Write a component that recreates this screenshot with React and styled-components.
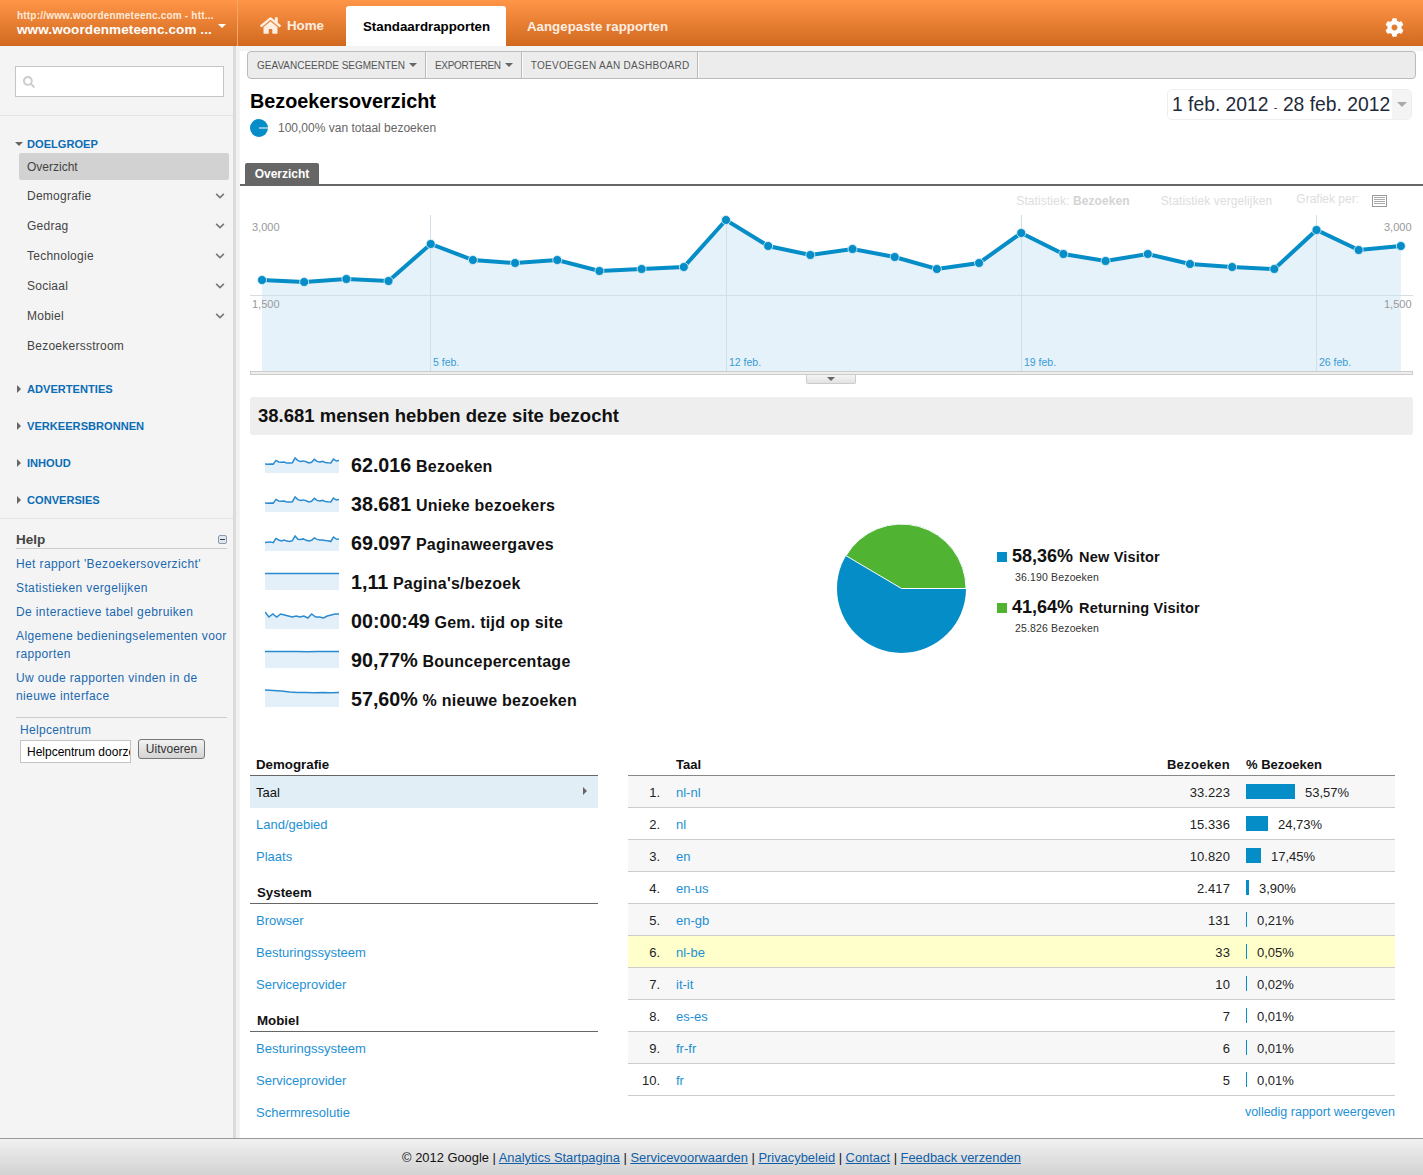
import React from 'react'
import styled, { createGlobalStyle } from 'styled-components'
import { FaHome, FaCog, FaSearch, FaChevronDown } from 'react-icons/fa'

const GlobalStyle = createGlobalStyle`
  html, body { margin: 0; padding: 0; background: #fff; }
  body { font-family: "Liberation Sans", Arial, sans-serif; font-size: 13px; color: #222; }
  * { box-sizing: border-box; }
  a { text-decoration: none; }
`

const chartY = [280, 282, 279, 281, 244, 260, 263, 260, 271, 269, 267, 220, 246, 255, 249, 257, 269, 263, 233, 254, 261, 254, 264, 267, 269, 230, 250, 246]
const chartPoints = chartY.map((y, i) => [22 + i * 42.18, y - 214])

const sideItems = ['Demografie', 'Gedrag', 'Technologie', 'Sociaal', 'Mobiel']
const sideSections = ['ADVERTENTIES', 'VERKEERSBRONNEN', 'INHOUD', 'CONVERSIES']
const helpLinks = [
  "Het rapport 'Bezoekersoverzicht'",
  'Statistieken vergelijken',
  'De interactieve tabel gebruiken',
  'Algemene bedieningselementen voor rapporten',
  'Uw oude rapporten vinden in de nieuwe interface',
]

const bump = chartY.map(y => 3 + (y - 220) / 10)
const metrics = [
  { value: '62.016', label: 'Bezoeken', line: bump },
  { value: '38.681', label: 'Unieke bezoekers', line: bump },
  { value: '69.097', label: 'Paginaweergaves', line: bump.map((y, i) => y + (i % 3 === 0 ? 0.6 : 0)) },
  { value: '1,11', label: "Pagina's/bezoek", line: [1.5, 1.5, 1.6, 1.5, 1.5, 1.6, 1.5, 1.5] },
  { value: '00:00:49', label: 'Gem. tijd op site', line: [1, 6, 3, 6, 3, 4, 5, 6, 5, 6, 5, 7, 3, 6, 6, 7, 5, 4, 3, 3] },
  { value: '90,77%', label: 'Bouncepercentage', line: [1.5, 1.5, 1.6, 1.5, 1.8, 1.5, 1.5, 1.5] },
  { value: '57,60%', label: '% nieuwe bezoeken', line: [1, 1.4, 2, 3, 3.4, 3.6, 3.8, 3.4, 3.8, 3.6] },
]

const groups = [
  { title: 'Demografie', items: ['Taal', 'Land/gebied', 'Plaats'] },
  { title: 'Systeem', items: ['Browser', 'Besturingssysteem', 'Serviceprovider'] },
  { title: 'Mobiel', items: ['Besturingssysteem', 'Serviceprovider', 'Schermresolutie'] },
]

const languages = [
  ['nl-nl', '33.223', 49, '53,57%'],
  ['nl', '15.336', 22, '24,73%'],
  ['en', '10.820', 15, '17,45%'],
  ['en-us', '2.417', 3, '3,90%'],
  ['en-gb', '131', 1, '0,21%'],
  ['nl-be', '33', 1, '0,05%'],
  ['it-it', '10', 1, '0,02%'],
  ['es-es', '7', 1, '0,01%'],
  ['fr-fr', '6', 1, '0,01%'],
  ['fr', '5', 1, '0,01%'],
]

function Sparkline({ line }) {
  const step = 74 / (line.length - 1)
  const pts = line.map((y, i) => `${(i * step).toFixed(1)},${y.toFixed(1)}`).join(' ')
  return (
    <svg width="74" height="18" viewBox="0 0 74 18">
      <polygon points={`0,18 ${pts} 74,18`} fill="#e3f0f9" />
      <polyline points={pts} fill="none" stroke="#2a8bd0" strokeWidth="1.5" />
    </svg>
  )
}

function TrafficChart() {
  const line = chartPoints.map(p => p.join(',')).join(' ')
  return (
    <svg width="1183" height="157" viewBox="0 0 1183 157" style={{ display: 'block' }}>
      <polygon points={`22,157 ${line} ${chartPoints[27][0]},157`} fill="#e5f2f9" />
      <line x1="10" x2="1173" y1="81.5" y2="81.5" stroke="#d3dfe6" />
      {[190.5, 486.5, 781.5, 1076.5].map(x => (
        <line key={x} x1={x} x2={x} y1="1" y2="157" stroke="#d3dfe6" />
      ))}
      <polyline points={line} fill="none" stroke="#058dc7" strokeWidth="4" />
      {chartPoints.map(([x, y]) => (
        <circle key={x} cx={x} cy={y} r="4.5" fill="#058dc7" stroke="#e5f2f9" strokeWidth="0.8" />
      ))}
      <g fontSize="11" fill="#999" fontFamily="Liberation Sans, sans-serif">
        <text x="12" y="17">3,000</text>
        <text x="12" y="94">1,500</text>
        <text x="1144" y="17">3,000</text>
        <text x="1144" y="94">1,500</text>
      </g>
      <g fontSize="10.5" fill="#3a9bd5" fontFamily="Liberation Sans, sans-serif">
        <text x="193" y="152">5 feb.</text>
        <text x="489" y="152">12 feb.</text>
        <text x="784" y="152">19 feb.</text>
        <text x="1079" y="152">26 feb.</text>
      </g>
    </svg>
  )
}

export default function App() {
  return (
    <Page>
      <GlobalStyle />
      <TopBar>
        <Account>
          <AccountUrl>http://www.woordenmeteenc.com - htt...</AccountUrl>
          <AccountName>www.woordenmeteenc.com ...</AccountName>
          <AccountCaret />
        </Account>
        <TopNav>
          <HomeLink><FaHome size={21} />Home</HomeLink>
          <TopTab $active>Standaardrapporten</TopTab>
          <TopTab>Aangepaste rapporten</TopTab>
        </TopNav>
        <Gear><FaCog size={19} /></Gear>
      </TopBar>

      <Body>
        <Sidebar>
          <SearchArea>
            <SearchBox><FaSearch size={12} color="#ccc" /></SearchBox>
          </SearchArea>
          <NavArea>
            <SectionHead $open><Caret $dir="down" />DOELGROEP</SectionHead>
            <SelectedItem>Overzicht</SelectedItem>
            {sideItems.map(item => (
              <NavItem key={item}>{item}<FaChevronDown size={10} color="#777" /></NavItem>
            ))}
            <NavItem>Bezoekersstroom</NavItem>
            {sideSections.map(s => (
              <SectionHead key={s}><Caret $dir="right" />{s}</SectionHead>
            ))}
          </NavArea>
          <HelpArea>
            <HelpHead>Help<CollapseIcon /></HelpHead>
            {helpLinks.map(l => <HelpLink key={l} href="#">{l}</HelpLink>)}
            <HelpCenter>
              <HelpLabel>Helpcentrum</HelpLabel>
              <HelpForm>
                <HelpInput defaultValue="Helpcentrum doorzoeken" />
                <HelpButton type="button">Uitvoeren</HelpButton>
              </HelpForm>
            </HelpCenter>
          </HelpArea>
        </Sidebar>
        <SideEdge />

        <Main>
          <TopStrip />
          <Toolbar>
            <ToolButton>GEAVANCEERDE SEGMENTEN<Caret $dir="down" $color="#666" /></ToolButton>
            <ToolButton $track="-0.3px">EXPORTEREN<Caret $dir="down" $color="#666" /></ToolButton>
            <ToolButton $track="0.29px">TOEVOEGEN AAN DASHBOARD</ToolButton>
          </Toolbar>

          <TitleRow>
            <div>
              <Title>Bezoekersoverzicht</Title>
              <SubTitle>
                <svg width="18" height="18" viewBox="0 0 18 18">
                  <circle cx="9" cy="9" r="9" fill="#058dc7" />
                  <line x1="9" y1="9" x2="18" y2="9" stroke="#fff" />
                </svg>
                100,00% van totaal bezoeken
              </SubTitle>
            </div>
            <DateBox>
              <DateText>1 feb. 2012 <small>-</small> 28 feb. 2012</DateText>
              <DateArrow><Caret $dir="down" $color="#aaa" $size={5} /></DateArrow>
            </DateBox>
          </TitleRow>

          <TabLine><Tab>Overzicht</Tab></TabLine>

          <ChartOptions>
            <span>Statistiek: <b>Bezoeken</b></span>
            <span>Statistiek vergelijken</span>
            <GraphPer>Grafiek per:</GraphPer>
            <svg width="15" height="12" viewBox="0 0 15 12">
              <rect x="0.5" y="0.5" width="14" height="11" fill="#fff" stroke="#999" />
              <path d="M2 2.5h11M2 4.5h11M2 6.5h11M2 8.5h11" stroke="#aaa" />
            </svg>
          </ChartOptions>
          <TrafficChart />
          <Scrubber>
            <ScrubHandle><Caret $dir="down" $color="#666" $size={4} /></ScrubHandle>
          </Scrubber>

          <Band>38.681 mensen hebben deze site bezocht</Band>

          <Overview>
            <Metrics>
              {metrics.map(m => (
                <Metric key={m.label}>
                  <Sparkline line={m.line} />
                  <MetricText><strong>{m.value}</strong> {m.label}</MetricText>
                </Metric>
              ))}
            </Metrics>
            <PieArea>
              <svg width="129" height="129" viewBox="-64.5 -64.5 129 129">
                <circle r="64.5" fill="#058dc7" />
                <path d="M0 0 L64.5 0 A64.5 64.5 0 0 0 -55.5 -32.8 Z" fill="#50b432" stroke="#fff" strokeWidth="1" />
              </svg>
              <Legend>
                <LegendEntry>
                  <LegendMain><Swatch $color="#058dc7" /><strong>58,36%</strong> New Visitor</LegendMain>
                  <LegendSub>36.190 Bezoeken</LegendSub>
                </LegendEntry>
                <LegendEntry>
                  <LegendMain><Swatch $color="#50b432" /><strong>41,64%</strong> Returning Visitor</LegendMain>
                  <LegendSub>25.826 Bezoeken</LegendSub>
                </LegendEntry>
              </Legend>
            </PieArea>
          </Overview>

          <Tables>
            <DimColumn>
              {groups.map((g, gi) => (
                <DimGroup key={g.title} $first={gi === 0}>
                  <DimHead $first={gi === 0}>{g.title}</DimHead>
                  {g.items.map(item =>
                    item === 'Taal' ? (
                      <DimActive key={item}>{item}<Caret $dir="right" $color="#666" /></DimActive>
                    ) : (
                      <DimLink key={item}><TableLink href="#">{item}</TableLink></DimLink>
                    )
                  )}
                </DimGroup>
              ))}
            </DimColumn>

            <DataColumn>
              <DataHead>
                <RankCell />
                <NameCell>Taal</NameCell>
                <NumCell>Bezoeken</NumCell>
                <PctCell>% Bezoeken</PctCell>
              </DataHead>
              {languages.map(([name, visits, bar, pct], i) => (
                <DataRow key={name} $odd={i % 2 === 0} $hilite={i === 5}>
                  <RankCell>{i + 1}.</RankCell>
                  <NameCell><TableLink href="#">{name}</TableLink></NameCell>
                  <NumCell>{visits}</NumCell>
                  <PctCell>
                    <Bar style={{ width: bar }} />
                    <PctValue>{pct}</PctValue>
                  </PctCell>
                </DataRow>
              ))}
              <FullReport><ReportLink href="#">volledig rapport weergeven</ReportLink></FullReport>
            </DataColumn>
          </Tables>
        </Main>
      </Body>

      <Footer>
        © 2012 Google | <a href="#">Analytics Startpagina</a> | <a href="#">Servicevoorwaarden</a> | <a href="#">Privacybeleid</a> | <a href="#">Contact</a> | <a href="#">Feedback verzenden</a>
      </Footer>
    </Page>
  )
}

const Page = styled.div`
  width: 1423px;
  height: 1175px;
  display: flex;
  flex-direction: column;
  overflow: hidden;
`

const TopBar = styled.header`
  height: 46px;
  flex: none;
  display: flex;
  background: linear-gradient(#ff9547, #d0691f);
  color: #fff;
`

const Account = styled.div`
  position: relative;
  width: 238px;
  flex: none;
  padding: 9px 0 0 17px;
  border-right: 1px solid #f0a873;
  font-weight: bold;
`

const AccountUrl = styled.div`
  font-size: 10px;
  line-height: 13px;
  letter-spacing: 0.2px;
  color: #ffe9d8;
`

const AccountName = styled.div`
  font-size: 13.5px;
  line-height: 15px;
  letter-spacing: 0.1px;
  color: #fff;
`

const AccountCaret = styled.i`
  position: absolute;
  right: 11px;
  top: 24px;
  border: 4px solid transparent;
  border-top: 4px solid #fff;
  border-bottom: 0;
  border-left-width: 4px;
`

const TopNav = styled.nav`
  flex: 1;
  display: flex;
  align-items: flex-end;
  padding-left: 22px;
`

const HomeLink = styled.div`
  display: flex;
  align-items: center;
  gap: 6px;
  height: 40px;
  width: 86px;
  font-size: 13.3px;
  font-weight: bold;
  color: #fdeee2;
  padding-bottom: 1px;
`

const TopTab = styled.div`
  height: 40px;
  width: ${p => (p.$active ? '160px' : 'auto')};
  display: flex;
  align-items: center;
  padding: 0 0 0 ${p => (p.$active ? '17px' : '21px')};
  font-size: 13.3px;
  font-weight: bold;
  white-space: nowrap;
  color: ${p => (p.$active ? '#000' : '#fdeee2')};
  background: ${p => (p.$active ? '#fff' : 'transparent')};
  border-radius: 3px 3px 0 0;
`

const Gear = styled.div`
  width: 58px;
  display: flex;
  align-items: center;
  justify-content: center;
  padding: 8px 0 0 0;
`

const Body = styled.div`
  flex: 1;
  display: flex;
  min-height: 0;
`

const Sidebar = styled.aside`
  width: 233px;
  flex: none;
  background: #f4f4f4;
`

const SideEdge = styled.div`
  width: 7px;
  flex: none;
  background: linear-gradient(90deg, #d8d8d8 0, #dedede 3px, #f0f0f0 3px, #f4f4f4 100%);
`

const SearchArea = styled.div`
  height: 70px;
  padding: 20px 9px 0 15px;
  border-bottom: 1px solid #e4e4e4;
`

const SearchBox = styled.div`
  height: 31px;
  background: #fff;
  border: 1px solid #c4c4c4;
  display: flex;
  align-items: center;
  padding-left: 7px;
`

const NavArea = styled.nav`
  padding-bottom: 9px;
  border-bottom: 1px solid #e4e4e4;
`

const SectionHead = styled.div`
  height: 20px;
  margin-top: 17px;
  display: flex;
  align-items: center;
  padding: 1px 0 0 ${p => (p.$open ? '15px' : '17px')};
  gap: ${p => (p.$open ? '4px' : '6px')};
  font-size: 11.1px;
  font-weight: bold;
  color: #0b6db5;
`

const Caret = styled.i`
  flex: none;
  width: 0;
  height: 0;
  border-style: solid;
  border-color: transparent;
  ${p => {
    const s = p.$size || 4
    const c = p.$color || '#666'
    return p.$dir === 'down'
      ? `border-width: ${s}px ${s}px 0; border-top-color: ${c};`
      : `border-width: ${s}px 0 ${s}px ${s}px; border-left-color: ${c};`
  }}
`

const SelectedItem = styled.div`
  height: 27px;
  margin: 0 4px 1px 19px;
  padding-left: 8px;
  display: flex;
  align-items: center;
  background: #d2d2d2;
  border-radius: 2px;
  font-size: 12px;
  color: #444;
`

const NavItem = styled.div`
  height: 30px;
  display: flex;
  align-items: center;
  justify-content: space-between;
  padding: 0 8px 0 27px;
  font-size: 12px;
  letter-spacing: 0.25px;
  color: #444;
`

const HelpArea = styled.div`
  padding: 11px 6px 0 16px;
`

const HelpHead = styled.div`
  height: 19px;
  display: flex;
  align-items: center;
  justify-content: space-between;
  border-bottom: 1px solid #ccc;
  font-size: 13.5px;
  font-weight: bold;
  color: #444;
  margin-bottom: 6px;
  padding-top: 1px;
`

const CollapseIcon = styled.i`
  width: 9px;
  height: 9px;
  background: linear-gradient(#3d3d3d, #3d3d3d) center / 5px 1px no-repeat, #dfe6ee;
  border: 1px solid #8a9bb0;
  border-radius: 2px;
`

const HelpLink = styled.a`
  display: block;
  margin-bottom: 6px;
  font-size: 12px;
  line-height: 18px;
  letter-spacing: 0.38px;
  color: #1a68b0;
`

const HelpCenter = styled.div`
  margin-top: 12px;
  border-top: 1px solid #ccc;
  padding: 4px 0 0 4px;
`

const HelpLabel = styled.div`
  height: 18px;
  line-height: 17px;
  font-size: 12px;
  letter-spacing: 0.3px;
  color: #1a68b0;
  margin-bottom: 1px;
`

const HelpForm = styled.div`
  display: flex;
  align-items: flex-start;
  gap: 7px;
  margin-top: -2px;
`

const HelpInput = styled.input`
  width: 111px;
  height: 23px;
  margin-top: 1px;
  padding: 0 0 0 6px;
  border: 1px solid #c4c4c4;
  background: #fff;
  font: 12px "Liberation Sans", sans-serif;
  color: #000;
  outline: 0;
`

const HelpButton = styled.button`
  width: 67px;
  height: 20px;
  padding: 0;
  border: 1px solid #777;
  border-radius: 3px;
  background: linear-gradient(#f2f2f2, #d4d4d4);
  font: 12px "Liberation Sans", sans-serif;
  color: #333;
`

const Main = styled.main`
  flex: 1;
  min-width: 0;
  background: #fff;
`

const TopStrip = styled.div`
  height: 5px;
  background: #f4f4f4;
`

const Toolbar = styled.div`
  height: 28px;
  margin: 0 7px;
  display: flex;
  background: #ececec;
  border: 1px solid #bbb;
  border-radius: 4px;
`

const ToolButton = styled.div`
  display: flex;
  align-items: center;
  gap: 4px;
  padding: 0 8px 0 9px;
  font-size: 10px;
  letter-spacing: ${p => p.$track || '0'};
  color: #555;
  border-right: 1px solid #bbb;
  box-shadow: 1px 0 0 #fafafa;
`

const TitleRow = styled.div`
  display: flex;
  justify-content: space-between;
  align-items: flex-start;
  padding: 10px 11px 0 10px;
`

const Title = styled.h1`
  margin: 0;
  font-size: 19.8px;
  line-height: 24px;
  font-weight: bold;
  color: #000;
`

const SubTitle = styled.div`
  margin-top: 6px;
  display: flex;
  align-items: center;
  gap: 10px;
  font-size: 12px;
  color: #666;
`

const DateBox = styled.div`
  width: 245px;
  height: 31px;
  display: flex;
  border: 1px solid #eee;
  border-radius: 5px;
  overflow: hidden;
`

const DateText = styled.div`
  flex: 1;
  padding-left: 4px;
  font-size: 19.3px;
  line-height: 29px;
  white-space: nowrap;
  color: #1f2a3a;
  small { font-size: 11px; }
`

const DateArrow = styled.div`
  width: 19px;
  flex: none;
  background: #f4f4f4;
  display: flex;
  align-items: center;
  justify-content: center;
`

const TabLine = styled.div`
  margin-top: 26px;
  padding-left: 5px;
  border-bottom: 2px solid #666;
  display: flex;
`

const Tab = styled.div`
  width: 74px;
  height: 21px;
  background: #666;
  color: #fff;
  border-radius: 2px 2px 0 0;
  font-size: 12px;
  font-weight: bold;
  line-height: 22px;
  text-align: center;
`

const ChartOptions = styled.div`
  height: 28px;
  display: flex;
  align-items: center;
  padding: 1px 36px 0 0;
  justify-content: flex-end;
  font-size: 12px;
  letter-spacing: 0.1px;
  color: #ddd;
  span { margin-right: 31px; }
  b { color: #d4d4d4; }
`

const GraphPer = styled.span`
  && { margin: -4px 13px 0 -7px; letter-spacing: 0; }
`

const Scrubber = styled.div`
  position: relative;
  height: 4px;
  margin: 0 10px;
  background: #eee;
  border: 1px solid #ccc;
  border-top-width: 1px;
`

const ScrubHandle = styled.div`
  position: absolute;
  left: 555px;
  top: 3px;
  width: 50px;
  height: 9px;
  display: flex;
  align-items: center;
  justify-content: center;
  background: linear-gradient(#f4f4f4, #e2e2e2);
  border: 1px solid #ccc;
  border-top: 0;
  border-radius: 0 0 2px 2px;
`

const Band = styled.div`
  height: 38px;
  margin: 22px 10px 0;
  padding-left: 8px;
  background: #eee;
  border-radius: 3px;
  font-size: 18.5px;
  font-weight: bold;
  line-height: 38px;
  color: #111;
`

const Overview = styled.section`
  height: 318px;
  display: flex;
  padding-left: 25px;
`

const Metrics = styled.div`
  width: 572px;
  flex: none;
  padding-top: 11px;
`

const Metric = styled.div`
  height: 39px;
  display: flex;
  align-items: center;
  gap: 12px;
  svg { margin-top: -4px; }
`

const MetricText = styled.div`
  font-size: 16px;
  font-weight: bold;
  letter-spacing: 0.25px;
  color: #111;
  strong { font-size: 19.7px; letter-spacing: 0; }
`

const PieArea = styled.div`
  display: flex;
  align-items: flex-start;
  padding-top: 89px;
`

const Legend = styled.div`
  margin: 22px 0 0 31px;
`

const LegendEntry = styled.div`
  height: 51px;
`

const LegendMain = styled.div`
  display: flex;
  align-items: baseline;
  gap: 6px;
  font-size: 14.5px;
  font-weight: bold;
  letter-spacing: 0.2px;
  color: #111;
  strong { font-size: 18px; letter-spacing: 0; }
`

const Swatch = styled.i`
  width: 10px;
  height: 10px;
  margin-right: -1px;
  background: ${p => p.$color};
`

const LegendSub = styled.div`
  margin: 4px 0 0 18px;
  font-size: 10.5px;
  letter-spacing: 0.15px;
  color: #333;
`

const Tables = styled.section`
  display: flex;
  gap: 30px;
  padding-left: 10px;
`

const DimColumn = styled.div`
  width: 348px;
  flex: none;
`

const DimGroup = styled.div`
  margin-top: ${p => (p.$first ? 0 : '9px')};
`

const DimHead = styled.div`
  height: 23px;
  padding-left: ${p => (p.$first ? '6px' : '7px')};
  border-bottom: 1px solid #666;
  font-size: 13.3px;
  font-weight: bold;
  line-height: 24px;
  color: #111;
`

const DimLink = styled.div`
  height: 32px;
  padding-left: 6px;
  line-height: 34px;
`

const DimActive = styled(DimLink)`
  display: flex;
  align-items: center;
  justify-content: space-between;
  padding: 2px 11px 0 6px;
  background: #e1eef6;
  color: #111;
  i { margin-top: -5px; }
`

const TableLink = styled.a`
  font-size: 13px;
  color: #1d90d4;
`

const ReportLink = styled(TableLink)`
  font-size: 12.5px;
`

const DataColumn = styled.div`
  width: 767px;
  flex: none;
`

const DataHead = styled.div`
  height: 23px;
  display: flex;
  align-items: center;
  border-bottom: 1px solid #888;
  font-size: 13px;
  font-weight: bold;
  color: #111;
  padding-top: 1px;
`

const DataRow = styled.div`
  height: 32px;
  display: flex;
  align-items: center;
  border-bottom: 1px solid #ccc;
  background: ${p => (p.$hilite ? '#ffffcb' : p.$odd ? '#f7f7f7' : '#fff')};
  color: #222;
`

const RankCell = styled.div`
  width: 32px;
  flex: none;
  text-align: right;
  padding-top: 2px;
`

const NameCell = styled.div`
  flex: 1;
  padding: 2px 0 0 16px;
  ${DataHead} & { padding-top: 0; }
`

const NumCell = styled.div`
  width: 150px;
  flex: none;
  text-align: right;
  padding-top: 2px;
  letter-spacing: 0.1px;
  ${DataHead} & { padding-top: 0; letter-spacing: 0.3px; }
`

const PctCell = styled.div`
  width: 165px;
  flex: none;
  padding-left: 16px;
  display: flex;
  align-items: center;
  gap: 10px;
`

const PctValue = styled.span`
  padding-top: 2px;
`

const Bar = styled.i`
  height: 15px;
  background: #058dc7;
`

const FullReport = styled.div`
  height: 30px;
  line-height: 31px;
  text-align: right;
`

const Footer = styled.footer`
  height: 37px;
  flex: none;
  border-top: 1px solid #999;
  background: linear-gradient(#f1f1f1, #d2d2d2);
  font-size: 12.9px;
  line-height: 37px;
  text-align: center;
  color: #111;
  a { color: #0f5ea8; text-decoration: underline; }
`
